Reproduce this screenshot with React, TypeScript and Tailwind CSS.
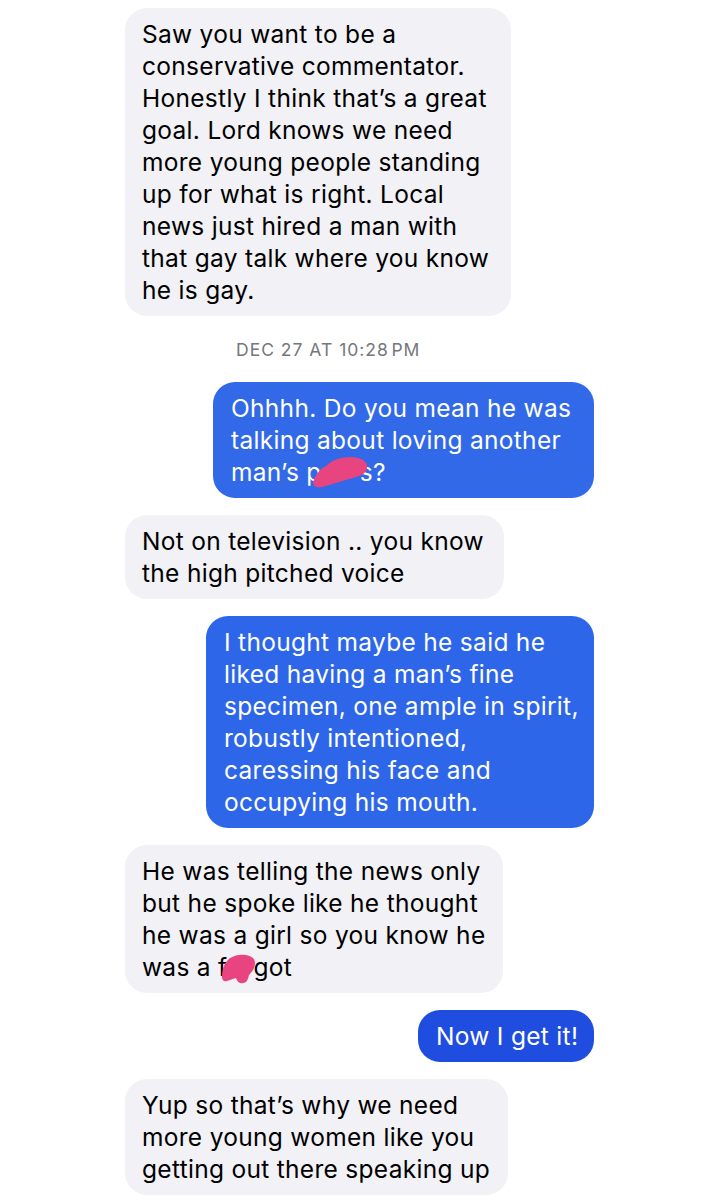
import type { ReactNode } from "react";

const PINK = "#e8447f";

function HiddenWord({ width, variant }: { width: number; variant: "band" | "blob" }) {
  // covered letters: the redaction scribble sits on top of an empty gap
  return (
    <span className="relative inline-block h-[1px]" style={{ width }}>
      {variant === "band" ? (
        <svg
          className="absolute left-[-11px] top-[-25px]"
          width="58"
          height="34"
          viewBox="0 0 58 34"
        >
          <path
            d="M2 28 C4 20 9 14 15 11 C21 5 30 2 40 2 C48 2 55 5 56 10 C57 16 53 20 45 22 C35 25 25 28 15 31 C8 33 3 33 2 28 Z"
            fill={PINK}
          />
        </svg>
      ) : (
        <svg
          className="absolute left-[-6px] top-[-22px]"
          width="36"
          height="32"
          viewBox="0 0 36 32"
        >
          <path
            d="M1 24 C1 17 3 10 9 5 C14 2 20 1 25 2 C30 3 34 5 34 10 C34 15 31 19 28 22 C27 26 26 30 22 30 C18 31 16 28 15 25 C12 26 9 27 6 28 C3 29 1 27 1 24 Z"
            fill={PINK}
          />
        </svg>
      )}
    </span>
  );
}

type Message = {
  from: "them" | "me";
  width: number;
  tone?: string;
  lines: ReactNode[];
};

const messages: Message[] = [
  {
    from: "me",
    width: 381,
    tone: "bg-[#3169e9]",
    lines: [
      "Ohhhh. Do you mean he was",
      "talking about loving another",
      <>
        man’s p<HiddenWord width={38} variant="band" />s?
      </>,
    ],
  },
  {
    from: "them",
    width: 379,
    lines: ["Not on television .. you know", "the high pitched voice"],
  },
  {
    from: "me",
    width: 388,
    tone: "bg-[#2e66ea]",
    lines: [
      "I thought maybe he said he",
      "liked having a man’s fine",
      "specimen, one ample in spirit,",
      "robustly intentioned,",
      "caressing his face and",
      "occupying his mouth.",
    ],
  },
  {
    from: "them",
    width: 378,
    lines: [
      "He was telling the news only",
      "but he spoke like he thought",
      "he was a girl so you know he",
      <>
        was a f<HiddenWord width={26} variant="blob" />got
      </>,
    ],
  },
  {
    from: "me",
    width: 176,
    tone: "bg-[#1f4de0]",
    lines: ["Now I get it!"],
  },
  {
    from: "them",
    width: 383,
    lines: [
      "Yup so that’s why we need",
      "more young women like you",
      "getting out there speaking up",
    ],
  },
];

function Bubble({ message }: { message: Message }) {
  const mine = message.from === "me";
  return (
    <div className={mine ? "flex justify-end" : "flex justify-start"}>
      <div
        className={
          mine
            ? `rounded-[22px] ${message.tone} py-[10px] pl-[18px] text-white`
            : "rounded-[22px] bg-[#f1f1f6] py-[10px] pl-[17px] text-black"
        }
        style={{ width: message.width }}
      >
        {message.lines.map((line, i) => (
          <div key={i} className="whitespace-nowrap leading-[32px]">
            {line}
          </div>
        ))}
      </div>
    </div>
  );
}

export default function App() {
  return (
    <div className="min-h-[1200px] bg-white pl-[125px] pr-[109px] pt-[8px] font-['Inter','Liberation_Sans',sans-serif] text-[24.5px] tracking-[0.3px]">
      <Bubble
        message={{
          from: "them",
          width: 386,
          lines: [
            "Saw you want to be a",
            "conservative commentator.",
            "Honestly I think that’s a great",
            "goal. Lord knows we need",
            "more young people standing",
            "up for what is right. Local",
            "news just hired a man with",
            "that gay talk where you know",
            "he is gay.",
          ],
        }}
      />

      <div className="pb-[22px] pl-[111px] pt-[24px] text-[17.5px] leading-[20px] tracking-[1px] text-[#76767b]">
        DEC 27 AT 10:28&#8202;PM
      </div>

      <div className="flex flex-col gap-[17px]">
        {messages.map((m, i) => (
          <Bubble key={i} message={m} />
        ))}
      </div>
    </div>
  );
}
